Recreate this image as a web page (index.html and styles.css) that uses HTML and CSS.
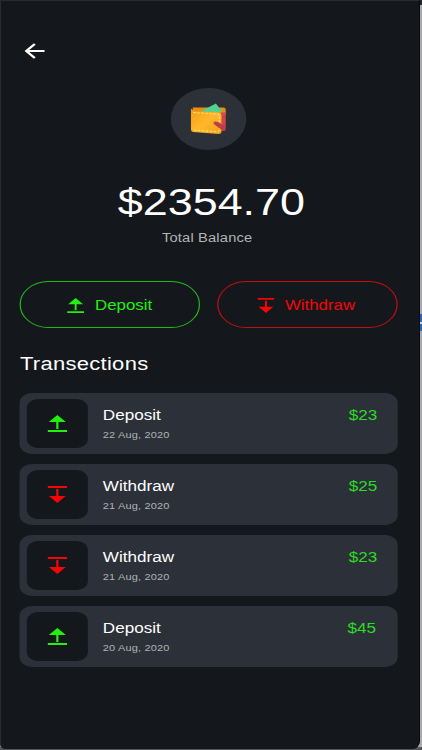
FILE: index.html
```
<!DOCTYPE html>
<html lang="en">
<head>
  <meta charset="UTF-8" />
  <meta name="viewport" content="width=device-width, initial-scale=1.0"/>
  <title>Wallet</title>
  <link rel="stylesheet" href="styles.css">
</head>
<body>
  <svg class="sprite" aria-hidden="true">
    <symbol id="up" viewBox="0 0 16 17">
      <path d="M8 0 L15 7 H8.900 V14 H7.100 V7 H1 Z M0 15 H16 V17 H0 Z"/>
    </symbol>
    <symbol id="down" viewBox="0 0 16 17">
      <path d="M0 0 H16 V2 H0 Z M7.100 3 H8.900 V10 H15 L8 17 L1 10 H7.100 Z"/>
    </symbol>
  </svg>

  <div class="phone">
    <main class="screen">
      <header class="top-bar">
        <svg class="back" viewBox="0 0 17 16"><path d="M8.5 1 L1.5 8 L8.5 15 M2 8 H16.5"/></svg>
      </header>

      <section class="balance">
        <div class="wallet-circle">
          <svg class="wallet" viewBox="0 0 30 32">
            <defs>
              <linearGradient id="leather" x1="0" y1="0" x2="1" y2="1">
                <stop offset="0" stop-color="#f39d13"/>
                <stop offset="0.5" stop-color="#ffb72c"/>
                <stop offset="1" stop-color="#f9a21b"/>
              </linearGradient>
            </defs>
            <path fill="#e58f1a" d="M2 4.500 H27 Q29 4.500 29 6.500 V12 H2 Z"/>
            <path fill="#56cf92" d="M9 9 L13 5.5 L21 .5 L26.5 9.5 Z"/>
            <path fill="#d4444f" d="M25 9.5 H29 V26 Q29 28 27 28 L24 28 Z"/>
            <path fill="url(#leather)" d="M1 5.500 Q2 8.500 5 8.500 L23 9.500 Q25.500 9.500 25.500 13 V28.500 Q25.500 31 23 31 L2.500 29 Q.5 28.700 .5 26.500 V6.500 Z"/>
            <path class="stitch" d="M2.5 9.5 L21 11 Q24 11 24 14 V26 Q24 29 21 28.700 L3 27"/>
            <path fill="#bd3e48" d="M19 19.500 Q20 18 22.500 19 L28.500 23 V28 H27 L20 21.800 Q18.800 20.500 19 19.500 Z"/>
          </svg>
        </div>
        <h1 class="amount">$2354.70</h1>
        <p class="caption">Total Balance</p>
      </section>

      <div class="actions">
        <button class="btn deposit"><svg class="btn-icon"><use href="#up"/></svg>Deposit</button>
        <button class="btn withdraw"><svg class="btn-icon"><use href="#down"/></svg>Withdraw</button>
      </div>

      <h2 class="section-title">Transections</h2>

      <ul class="list">
        <li class="card">
          <div class="tile deposit"><svg class="tile-icon"><use href="#up"/></svg></div>
          <div class="info">
            <div class="name">Deposit</div>
            <div class="date">22 Aug, 2020</div>
          </div>
          <div class="price">$23</div>
        </li>
        <li class="card">
          <div class="tile withdraw"><svg class="tile-icon"><use href="#down"/></svg></div>
          <div class="info">
            <div class="name">Withdraw</div>
            <div class="date">21 Aug, 2020</div>
          </div>
          <div class="price">$25</div>
        </li>
        <li class="card">
          <div class="tile withdraw"><svg class="tile-icon"><use href="#down"/></svg></div>
          <div class="info">
            <div class="name">Withdraw</div>
            <div class="date">21 Aug, 2020</div>
          </div>
          <div class="price">$23</div>
        </li>
        <li class="card">
          <div class="tile deposit"><svg class="tile-icon"><use href="#up"/></svg></div>
          <div class="info">
            <div class="name">Deposit</div>
            <div class="date">20 Aug, 2020</div>
          </div>
          <div class="price last">$45</div>
        </li>
      </ul>
    </main>
  </div>
</body>
</html>
```

FILE: styles.css
```
* {
  box-sizing: border-box;
}

body {
  margin: 0;
  height: 750px;
  overflow: hidden;
  font-family: "Liberation Sans", Arial, sans-serif;
  color: #fff;
  background: linear-gradient(#23272b 5px, #a9abae 5px, #a9abae 314px, #2867b5 314px, #2867b5 322px, #c5d3e4 322px, #c5d3e4 324px, #2867b5 324px, #2867b5 331px, #a9abae 331px, #a9abae 747px, #55565a 747px);
}

.sprite {
  display: none;
}

.phone {
  width: 420px;
  height: 749px;
  overflow: hidden;
  background: #14171b;
  border-top: 1px solid #282b2f;
  border-left: 1px solid #282b2f;
  border-right: 1px solid #08090b;
  border-radius: 0 0 8px 5px;
}

/* wide aspect: everything inside is stretched horizontally */
.screen {
  width: 344px;
  margin-left: -1px;
  padding: 41px 0 0 16.3px;
  transform: scaleX(1.22);
  transform-origin: 0 0;
}

.top-bar {
  padding-left: 4px;
  height: 46px;
}

.back {
  display: block;
  width: 17px;
  height: 18px;
  fill: none;
  stroke: #fff;
  stroke-width: 2;
}

.balance {
  display: flex;
  flex-direction: column;
  align-items: center;
  width: 310px;
}

.wallet-circle {
  display: flex;
  align-items: center;
  justify-content: center;
  width: 62px;
  height: 62px;
  border-radius: 50%;
  background: #2c3038;
}

.wallet {
  width: 30px;
  height: 32px;
}

.stitch {
  fill: none;
  stroke: #ffe36b;
  stroke-width: 1.1;
  stroke-dasharray: 2 1.3;
}

.amount {
  margin: 32px 0 0 4px;
  font-size: 36.8px;
  font-weight: normal;
  line-height: 42px;
}

.caption {
  margin: 6px 3px 0 0;
  font-size: 12px;
  line-height: 16px;
  color: #b3b4b6;
  letter-spacing: 0.15px;
}

.actions {
  display: flex;
  gap: 14px;
  width: 310px;
  margin-top: 35px;
}

.btn {
  display: flex;
  align-items: center;
  justify-content: center;
  gap: 9px;
  width: 148px;
  height: 47px;
  padding: 1px 1px 0 0;
  font-family: inherit;
  font-size: 13.8px;
  background: none;
  border: 1px solid currentColor;
  border-radius: 24px;
}

.btn.deposit {
  border-color: #20b817;
}

.btn.withdraw {
  padding-right: 3px;
  border-color: #c40f12;
}

.btn-icon {
  width: 14px;
  height: 15px;
}

svg {
  fill: currentColor;
}

.deposit {
  color: #22f00f;
}

.withdraw {
  color: #f50505;
}

.section-title {
  margin: 24px 0 0;
  font-size: 18px;
  font-weight: normal;
  line-height: 24px;
  letter-spacing: 0.25px;
}

.list {
  display: flex;
  flex-direction: column;
  gap: 10px;
  width: 310px;
  margin: 17px 0 0;
  padding: 0;
  list-style: none;
}

.card {
  display: flex;
  height: 61px;
  padding: 6px 17px 0 6px;
  border-radius: 10px;
  background: #2c3038;
}

.tile {
  display: flex;
  align-items: center;
  justify-content: center;
  width: 50px;
  height: 49px;
  border-radius: 9px;
  background: #14171b;
}

.tile-icon {
  width: 16px;
  height: 17px;
}

.info {
  flex: 1;
  padding: 8px 0 0 12px;
}

.name {
  font-size: 14px;
  line-height: 16px;
}

.date {
  margin-top: 6px;
  font-size: 9px;
  line-height: 12px;
  letter-spacing: 0.13px;
  color: #b0b2b5;
}

.price {
  padding-top: 8px;
  font-size: 14px;
  line-height: 16px;
  color: #2bdc25;
}

.price.last {
  padding-right: 1px;
}
```
